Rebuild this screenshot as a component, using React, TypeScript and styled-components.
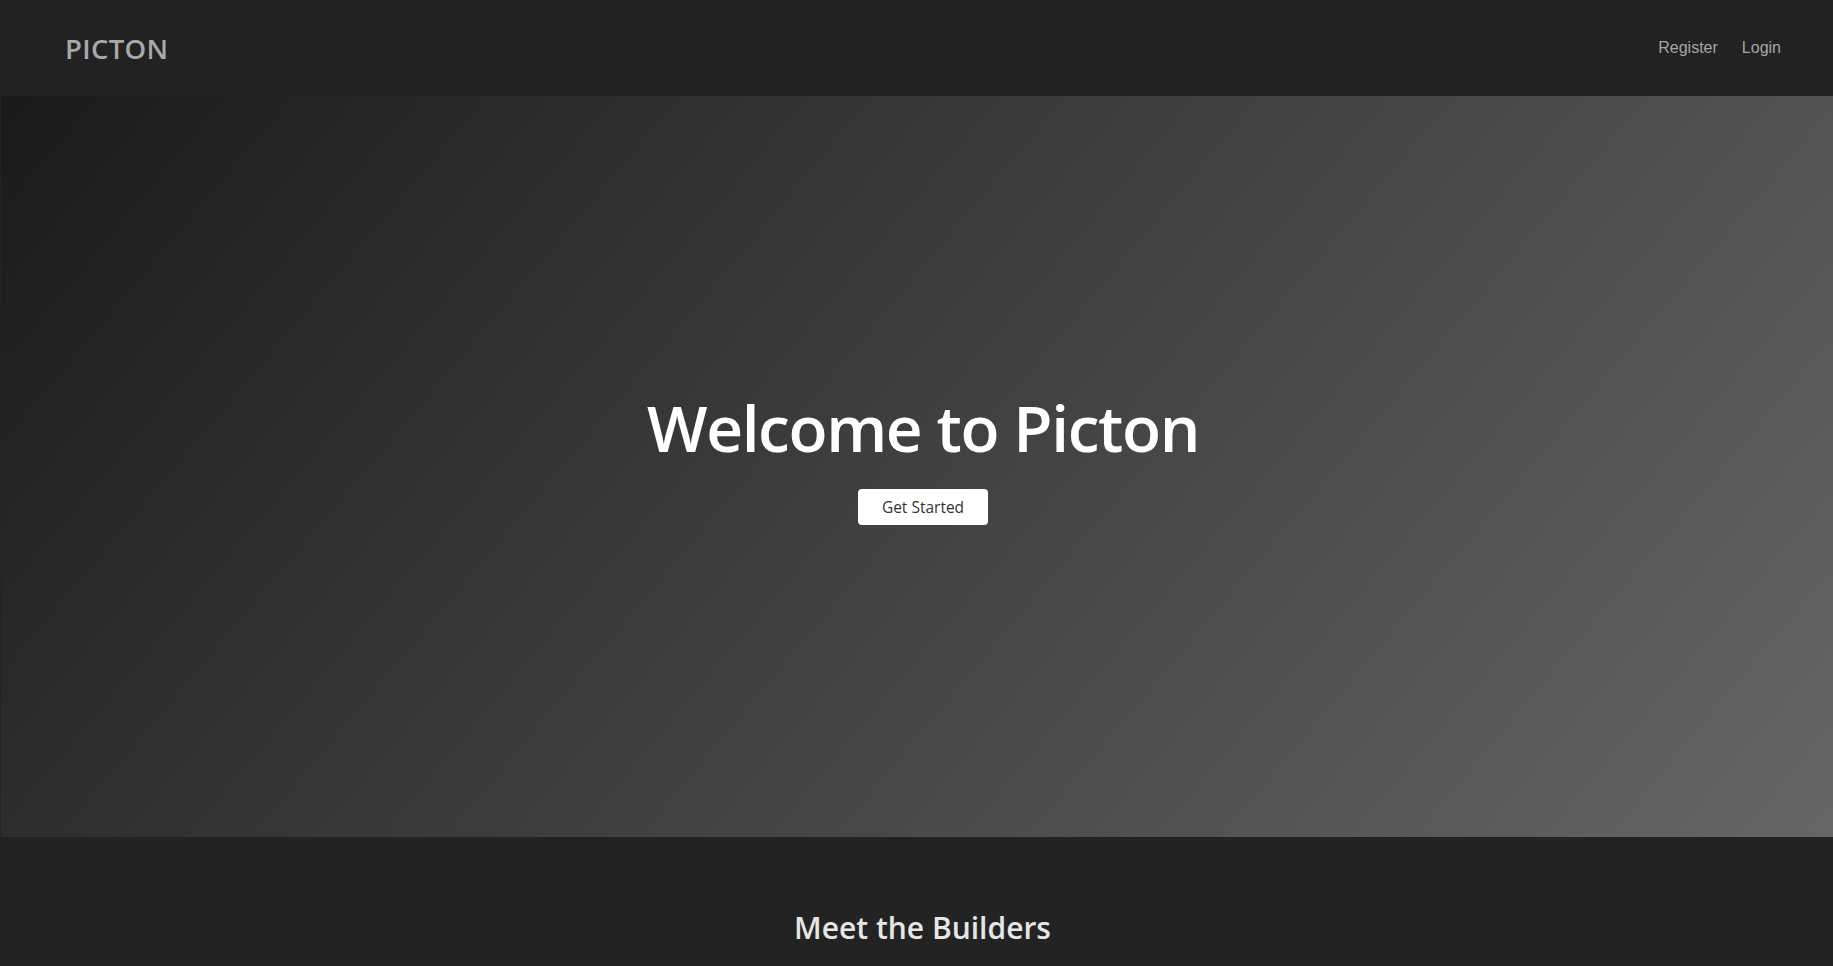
import React from "react";
import styled, { createGlobalStyle } from "styled-components";

const GlobalStyle = createGlobalStyle`
  html, body { margin: 0; padding: 0; background: #232323; }
  body { font-family: "Open Sans", "Noto Sans", sans-serif; overflow: hidden; }
  * { box-sizing: border-box; }
`;

const Header = styled.header`
  height: 96px;
  background: #222222;
  display: flex;
  align-items: center;
  justify-content: space-between;
  padding: 0 52px 0 65px;
`;

const Logo = styled.div`
  font-family: "Open Sans", sans-serif;
  font-weight: 600;
  font-size: 27.5px;
  color: #a8a8a8;
  letter-spacing: 0.3px;
`;

const Nav = styled.nav`
  display: flex;
  gap: 24px;
`;

const NavLink = styled.a`
  font-family: "Liberation Sans", Arial, sans-serif;
  font-size: 16px;
  color: #a6a6a6;
  text-decoration: none;
`;

const Hero = styled.section`
  height: 741px;
  margin-left: 1px;
  background: linear-gradient(130deg, #1a1a1a 0%, #666666 100%);
  display: flex;
  flex-direction: column;
  align-items: center;
  justify-content: center;
  padding: 0 0 24px 12px;
`;

const Title = styled.h1`
  margin: 0;
  font-family: "Open Sans", sans-serif;
  font-weight: 600;
  font-size: 64px;
  letter-spacing: -1.4px;
  color: #ffffff;
`;

const CTA = styled.button`
  margin-top: 18px;
  width: 130px;
  height: 36px;
  border: none;
  border-radius: 4px;
  background: #ffffff;
  color: #333333;
  font-family: "Open Sans", sans-serif;
  font-size: 15.5px;
  cursor: pointer;
`;

const Builders = styled.section`
  background: #232323;
  padding: 70px 0 0 12px;
  display: flex;
  justify-content: center;
`;

const SectionTitle = styled.h2`
  margin: 0;
  font-family: "Open Sans", sans-serif;
  font-weight: 600;
  font-size: 30px;
  color: #e6e6e6;
`;

export default function App() {
  return (
    <>
      <GlobalStyle />
      <Header>
        <Logo>PICTON</Logo>
        <Nav>
          <NavLink href="#">Register</NavLink>
          <NavLink href="#">Login</NavLink>
        </Nav>
      </Header>
      <Hero>
        <Title>Welcome to Picton</Title>
        <CTA>Get Started</CTA>
      </Hero>
      <Builders>
        <SectionTitle>Meet the Builders</SectionTitle>
      </Builders>
    </>
  );
}
